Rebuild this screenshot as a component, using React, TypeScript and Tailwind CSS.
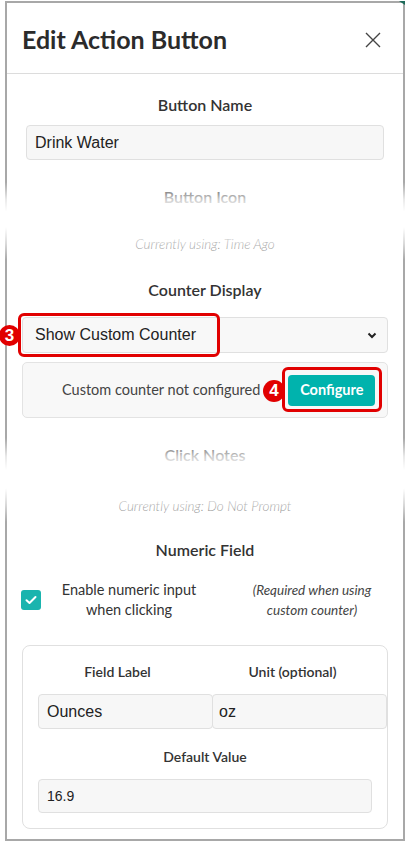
import React from 'react'

const Label = ({ children, className = '' }: { children: React.ReactNode; className?: string }) => (
  <div className={`h-5 text-center text-[16px] leading-5 font-semibold text-[#333] ${className}`}>{children}</div>
)

const Hint = ({ children, className = '' }: { children: React.ReactNode; className?: string }) => (
  <div className={`h-4 text-center text-[13.5px] leading-4 italic font-light text-[#555] ${className}`}>{children}</div>
)

const Badge = ({ n, className }: { n: string; className: string }) => (
  <div
    className={`absolute flex items-center justify-center rounded-full bg-[#e10000] text-white text-[17px] font-bold font-['Liberation_Sans',Arial,sans-serif] ${className}`}
  >
    {n}
  </div>
)

export default function App() {
  return (
    <div className="relative w-[406px] h-[842px] bg-white overflow-hidden font-[Lato,sans-serif]">
      {/* рамка модалки */}
      <div className="ml-[5px] mt-[1px] w-[400px] h-[840px] border-2 border-[#a8a8a8]">
        {/* Header */}
        <div className="h-[71px] border-b border-[#dcdcdc] flex items-center justify-between pl-[15px] pr-[22px]">
          <div className="text-[25px] font-bold text-[#2b2b2b] pt-[4px]">Edit Action Button</div>
          <svg width="16" height="16" viewBox="0 0 16 16" className="mt-[4px]">
            <path d="M1 1L15 15M15 1L1 15" stroke="#444" strokeWidth="1.4" fill="none" />
          </svg>
        </div>

        {/* Button Name */}
        <Label className="mt-[21px]">Button Name</Label>
        <div className="mt-[10px] mx-[19px] h-[35px] rounded-[4px] border border-[#e0e0e0] bg-[#f7f7f7] flex items-center px-[8px] text-[16px] text-[#222] font-['Liberation_Sans',Arial,sans-serif]">
          Drink Water
        </div>

        {/* Button Icon (приглушено) */}
        <Label className="mt-[27px]">Button Icon</Label>
        <Hint className="mt-[29px]">Currently using: Time Ago</Hint>

        {/* Counter Display */}
        <Label className="mt-[28px]">Counter Display</Label>
        <div className="mt-[17px] mx-[15px] h-[36px] rounded-[4px] border border-[#e0e0e0] bg-[#f8f8f8] flex items-center justify-between pl-[12px] pr-[10px] text-[16px] text-[#222] font-['Liberation_Sans',Arial,sans-serif]">
          <span>Show Custom Counter</span>
          <svg width="10" height="7" viewBox="0 0 10 7">
            <path d="M1.5 1.5L5 5L8.5 1.5" stroke="#222" strokeWidth="2" fill="none" />
          </svg>
        </div>
        <div className="mt-[9px] mx-[15px] h-[56px] rounded-[5px] border border-[#e3e3e3] bg-[#f8f8f8] flex items-center pl-[39px]">
          <span className="text-[14.5px] text-[#444]">Custom counter not configured</span>
          <div className="ml-[28px] w-[87px] h-[31px] rounded-[4px] bg-[#00b3ad] flex items-center justify-center text-white text-[14.5px] font-bold">
            Configure
          </div>
        </div>

        {/* Click Notes (приглушено) */}
        <Label className="mt-[27px]">Click Notes</Label>
        <Hint className="mt-[33px]">Currently using: Do Not Prompt</Hint>

        {/* Numeric Field */}
        <Label className="mt-[26px]">Numeric Field</Label>
        <div className="mt-[20px] flex items-center h-[40px]">
          <div className="ml-[14px] w-[20px] h-[20px] rounded-[3px] bg-[#1ab4ae] flex items-center justify-center">
            <svg width="12" height="10" viewBox="0 0 12 10">
              <path d="M1.5 5.2L4.5 8L10.5 2" stroke="#fff" strokeWidth="2" fill="none" strokeLinecap="round" strokeLinejoin="round" />
            </svg>
          </div>
          <div className="ml-[13px] w-[150px] text-center text-[14.5px] leading-5 text-[#333]">
            Enable numeric input
            <br />
            when clicking
          </div>
          <div className="ml-[40px] w-[136px] text-center text-[13.5px] leading-5 italic text-[#444]">
            (Required when using
            <br />
            custom counter)
          </div>
        </div>

        <div className="mt-[25px] mx-[15px] h-[184px] rounded-[8px] border border-[#e0e0e0]">
          <div className="mt-[16px] mx-[7px] grid grid-cols-2">
            <div className="h-5 text-center text-[14px] leading-5 font-semibold text-[#333]">Field Label</div>
            <div className="h-5 text-center text-[14px] leading-5 font-semibold text-[#333]">Unit (optional)</div>
          </div>
          <div className="mt-[12px] ml-[15px] flex text-[16px] text-[#222] font-['Liberation_Sans',Arial,sans-serif]">
            <div className="w-[176px] h-[35px] rounded-[4px] border border-[#e0e0e0] bg-[#f7f7f7] flex items-center px-[8px]">
              Ounces
            </div>
            <div className="-ml-px w-[176px] h-[35px] rounded-[4px] border border-[#e0e0e0] bg-[#f7f7f7] flex items-center px-[6px]">
              oz
            </div>
          </div>
          <div className="mt-[18px] h-5 text-center text-[14px] leading-5 font-semibold text-[#333]">Default Value</div>
          <div className="mt-[12px] mx-[15px] h-[34px] rounded-[4px] border border-[#e0e0e0] bg-[#f7f7f7] flex items-center px-[8px] text-[14px] text-[#222] font-['Liberation_Sans',Arial,sans-serif]">
            16.9
          </div>
        </div>
      </div>

      {/* уголок справа сверху */}
      <div className="absolute top-[1px] right-[1px] w-0 h-0 border-t-[4px] border-t-[#1d6b5a] border-l-[6px] border-l-transparent" />

      {/* затемнение неактивных секций */}
      <div className="absolute left-0 top-[182px] w-[406px] h-[78px] bg-[linear-gradient(to_bottom,rgba(255,255,255,0)_0%,rgba(255,255,255,0.75)_22%,#fff_38%,#fff_58%,rgba(255,255,255,0.55)_80%,rgba(255,255,255,0)_100%)]" />
      <div className="absolute left-0 top-[438px] w-[406px] h-[84px] bg-[linear-gradient(to_bottom,rgba(255,255,255,0)_0%,rgba(255,255,255,0.75)_22%,#fff_38%,#fff_60%,rgba(255,255,255,0.55)_80%,rgba(255,255,255,0)_100%)]" />

      {/* аннотации */}
      <div className="absolute left-[18px] top-[313px] w-[202px] h-[44px] rounded-[6px] border-[3px] border-[#e10000]" />
      <Badge n="3" className="left-[-1px] top-[325px] w-[21px] h-[21px]" />
      <div className="absolute left-[282px] top-[367px] w-[100px] h-[45px] rounded-[6px] border-[3px] border-[#e10000]" />
      <Badge n="4" className="left-[263px] top-[380px] w-[22px] h-[22px]" />
    </div>
  )
}
